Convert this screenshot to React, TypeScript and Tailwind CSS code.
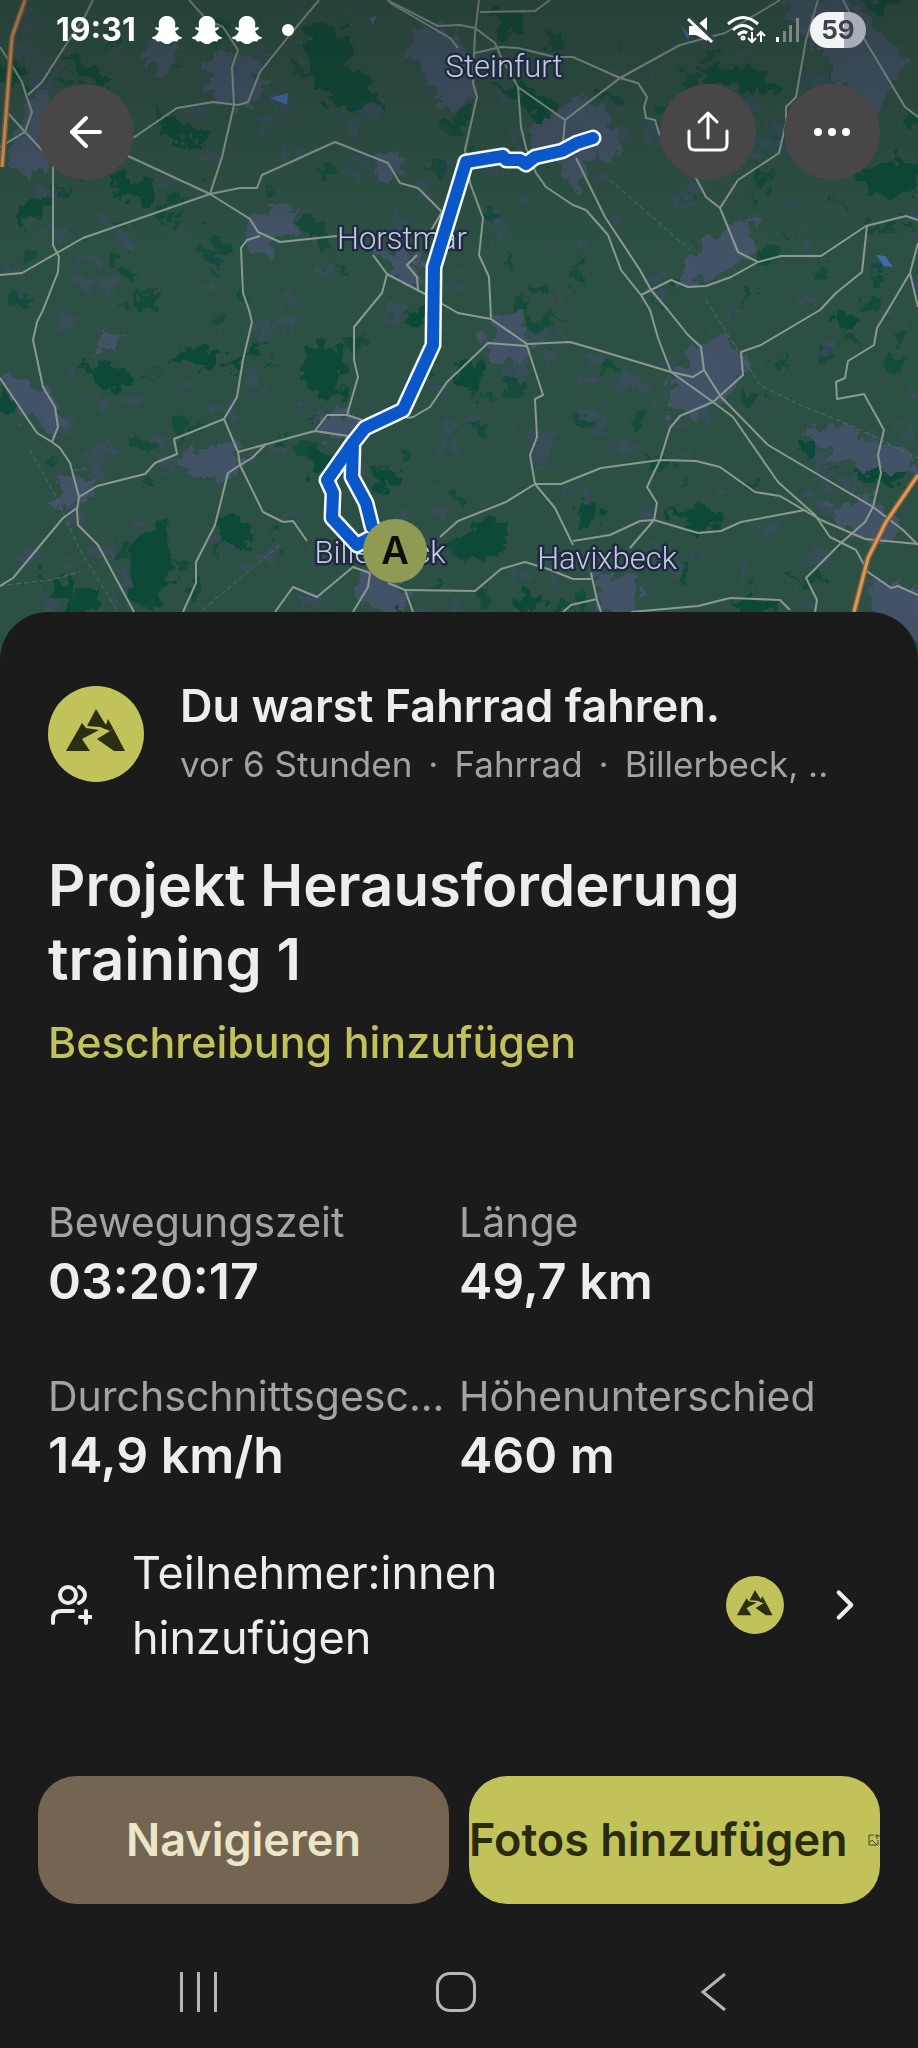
import { ArrowLeft, ChevronRight } from 'lucide-react';
import { FaSnapchatGhost } from 'react-icons/fa';

const ROADS = [
  '93,0 83,20 67,43 42,82 28,95',
  '0,47 13,67 22,82 26,95 32,112 25,132 0,147',
  '7,112 25,132 42,150 53,165 53,245 59,257 58,272 43,310 37,322 33,340 43,387 55,407 58,427 52,442',
  '0,275 22,273 83,238 210,194 240,188 257,188 262,175 335,142 388,163 400,183 418,188 442,212 430,232',
  '128,156 210,194 250,219 258,232 280,242 337,236',
  '133,138 177,108 213,102 238,105 248,102 260,72 288,37 319,0',
  '189,0 207,20 223,27 238,50 232,67 234,105 222,157 210,194',
  '260,236 247,240 241,248 243,293 249,310 252,322 243,360 237,397 224,419',
  '387,0 438,26 460,25 475,28 495,43 501,57 518,87 565,120 620,78 680,45 725,33 780,0',
  '390,3 450,38 458,48',
  '373,255 387,274 425,294 458,313 491,319 527,344 570,342 591,348 671,372 693,377 704,370',
  '387,274 382,293 354,327 354,360 358,377 347,415',
  '417,255 407,265 417,277 418,290',
  '479,0 475,33 473,83 477,97 465,150 470,183 483,218 479,255 489,277 491,318',
  '480,12 535,11 550,0',
  '475,53 501,47 518,48 555,57 573,57 620,78 638,83 647,97 644,107 646,118 655,120 659,133 696,178 706,197 720,208 738,252 758,262',
  '518,87 521,127 526,148 536,173 546,187 573,205 586,210 608,235 621,270 641,295 650,310 658,338 671,372',
  '565,120 563,143',
  '576,158 605,217 640,270 651,290 668,310 688,335 701,347 704,370 721,397 768,445 873,507 903,530 918,545',
  '641,295 671,280 688,287 706,286 731,277 758,262 781,256 821,256 866,226 906,216 918,220',
  '867,226 862,272 836,293 820,310 761,345 741,352 743,375 713,402 680,416 670,428 660,460 647,487 657,503 654,520 630,548',
  '818,0 806,40 796,97 786,107 786,123 779,153 738,180 720,208',
  '843,0 863,37 905,107 918,117',
  '918,243 910,273 888,310 877,328 874,345 848,361 845,378 836,382 837,399 864,394 884,430 878,455 881,473 873,507 865,522 841,543 806,578 817,600 815,612',
  '910,273 918,307',
  '407,418 413,417 430,407 447,382 488,343 527,346 543,395 535,399 537,437 530,455 535,484 555,508 573,545',
  '440,537 458,521 506,502 535,484 561,484 601,468 660,460 696,461 720,467 755,492 780,496 821,520 865,539 918,544',
  '671,372 713,402 733,417 778,482 815,515 830,537 856,550 868,572 891,588 898,586 918,595',
  '573,541 610,535 640,521 654,520 698,533 721,531 741,522 805,510',
  '405,590 475,591 501,569 525,562 548,569 573,579 591,579',
  '591,573 597,600 601,612',
  '597,599 571,605 563,612',
  '631,612 698,606 730,598 780,600 790,610',
  '0,378 37,433 52,442 60,448 70,463 79,497 77,510 78,525 98,545 134,612',
  '0,586 13,578 63,518 77,508',
  '79,497 97,486 145,474 155,463 177,454 174,439 224,419 238,452 240,465 263,512 283,522 293,521 307,541',
  '238,452 307,433 315,431 348,436',
  '315,431 327,415 347,415 362,420',
  '265,445 252,458 240,465 228,473 215,525 196,562 196,583 183,612',
  '275,612 293,587 317,597 353,567 370,573 368,587 353,612',
  '388,583 405,590 413,612',
];

const RAILS = [
  '610,180 650,215 690,250',
  '706,300 728,335 760,385 800,405 850,425 918,458',
  '30,450 55,495 80,550 118,612',
  '280,545 200,612',
  '0,586 50,580 80,572',
];

const HIGHWAYS = ['25,0 12,37 2,167', '918,475 886,522 868,558 854,612'];

const ROUTE =
  'M593 138 577 143 562 151 535 157 526 164 520 160 506 160 503 156 466 162 434 267 433 345 403 410 365 428 353 443 327 480 333 493 332 518 357 545 385 530 M353 443 352 477 366 503 372 527 390 545';

// forests, drawn as x y pairs
const FORESTS = [
  '305,28 340,22 345,60 368,88 385,92 378,105 345,108 330,98 308,75',
  '495,10 512,8 516,30 498,38',
  '865,0 900,0 895,10 872,8',
  '500,85 545,95 560,118 545,125 522,105',
  '700,65 765,72 775,92 740,86 705,78',
  '860,172 900,160 918,168 918,195 870,190',
  '68,55 85,62 110,88 98,92 78,75',
  '160,118 190,125 205,142 180,140 165,132',
  '115,178 148,185 148,200 118,196',
  '20,205 50,198 42,215 22,222',
  '85,365 125,370 128,385 98,385',
  '305,350 342,345 340,398 325,400 303,378',
  '135,540 160,528 170,560 162,602 130,600 135,570',
  '222,518 245,525 246,545 220,540',
  '262,342 255,352 240,358 242,364 232,364',
  '0,70 25,65 22,85 0,82',
  '458,535 505,520 505,550 478,558 458,550',
  '575,508 592,500 600,520 580,528',
  '672,510 715,512 716,528 690,530',
  '858,470 905,478 900,484 866,480',
  '458,364 482,366 478,388 458,385',
  '0,392 12,398 8,410 0,408',
  '375,470 400,475 396,488 378,484',
  '800,440 820,442 815,455 800,450',
  '55,580 72,586 68,600 54,594',
  '70,596 98,590 90,612 66,612',
  '520,595 540,598 538,612 522,610',
  '832,312 852,318 848,328 835,322',
  '428,307 418,304 410,322 418,325',
  '310,452 330,458 330,475 312,472',
  '735,600 780,605 775,614 738,612',
  '200,370 225,355 218,350 180,352 176,360 198,362',
];

const TOWNS = [
  '220,48 250,58 265,85 248,108 228,100 205,82',
  '410,30 455,30 475,90 455,110 430,85 415,60',
  '530,130 565,110 580,95 605,115 620,150 590,160 575,198 570,170 540,150',
  '782,0 840,0 905,60 880,95 868,130 850,90 830,55 800,30',
  '35,95 50,100 45,160 30,180 12,160 18,130',
  '250,218 290,208 298,235 268,240 275,260 258,250',
  '378,162 395,150 402,172 384,180',
  '378,252 410,248 420,285 398,275',
  '728,225 752,225 750,255 715,275 680,285 690,262',
  '5,380 28,382 55,405 58,430 30,420 15,400',
  '485,338 500,318 522,315 525,345 512,362 492,360',
  '698,345 722,335 745,358 735,385 715,402 680,412 668,405 678,375',
  '208,450 235,440 240,470 215,478 195,472 180,458',
  '322,420 350,415 350,432 328,438',
  '62,480 92,474 90,496 65,510 58,500',
  '360,575 388,570 405,600 390,612 360,600',
  '593,575 640,580 632,608 605,608',
  '830,505 868,500 895,530 880,545 845,530 835,520',
  '874,580 918,590 918,640 890,625 876,600',
  '810,430 850,428 870,445 905,450 918,475 870,468 830,455',
  '100,335 118,338 112,350 100,350',
  '160,35 175,50 165,68 140,60',
];

const WATER = ['270,98 288,93 287,105', '876,255 885,256 893,267 884,266', '370,18 376,16 373,25', '680,25 690,35 688,40'];

// deterministic pseudo random so the fields stay in place between renders
const rand = (n: number) => {
  const v = Math.sin(n * 127.1 + 311.7) * 43758.5453;
  return v - Math.floor(v);
};

const FIELDS = Array.from({ length: 520 }, (_, i) => {
  const x = Math.round(rand(i) * 918);
  const y = Math.round(rand(i + 1000) * 650);
  const w = 5 + Math.round(rand(i + 2000) * 18);
  const h = 5 + Math.round(rand(i + 3000) * 16);
  return {
    points: `${x},${y} ${x + w},${y + 3} ${x + w - 3},${y + h} ${x + 2},${y + h - 2}`,
    forest: i % 3 === 0,
  };
});

const LABELS = [
  { name: 'Steinfurt', x: 504, y: 77 },
  { name: 'Horstmar', x: 402, y: 249 },
  { name: 'Billerbeck', x: 380, y: 563 },
  { name: 'Havixbeck', x: 607, y: 569 },
];

const STATS = [
  { label: 'Bewegungszeit', value: '03:20:17' },
  { label: 'Länge', value: '49,7 km' },
  { label: 'Durchschnittsgesc...', value: '14,9 km/h' },
  { label: 'Höhenunterschied', value: '460 m' },
];

function TourMap() {
  return (
    <svg
      className="absolute inset-0 h-full w-full bg-[#2d5044]"
      viewBox="0 0 918 660"
      preserveAspectRatio="xMidYMin slice"
      role="img"
      aria-label="Karte der Tour"
    >
      <defs>
        <linearGradient id="shade" x1="0" y1="0" x2="0" y2="1">
          <stop offset="0" stopColor="#1d2b28" stopOpacity="0.4" />
          <stop offset="1" stopColor="#1d2b28" stopOpacity="0" />
        </linearGradient>
        {/* breaks up the straight polygon edges of woods and villages */}
        <filter id="rough" x="0" y="0" width="918" height="660" filterUnits="userSpaceOnUse">
          <feTurbulence type="fractalNoise" baseFrequency="0.07" numOctaves="3" seed="4" result="noise" />
          <feDisplacementMap in="SourceGraphic" in2="noise" scale="30" xChannelSelector="R" yChannelSelector="G" />
        </filter>
      </defs>
      <g filter="url(#rough)">
        {FIELDS.map((f, i) => (
          <polygon key={i} points={f.points} fill={f.forest ? '#134a3a' : '#3b4c60'} opacity={f.forest ? 0.8 : 0.7} />
        ))}
        {FORESTS.map((p) => (
          <polygon key={p} points={p} fill="#0e4a38" stroke="#0e4a38" strokeWidth="4" />
        ))}
        {TOWNS.map((p) => (
          <polygon key={p} points={p} fill="#48546c" stroke="#48546c" strokeWidth="4" opacity="0.9" />
        ))}
      </g>
      {WATER.map((p) => (
        <polygon key={p} points={p} fill="#3f6ba8" />
      ))}
      <g fill="none" strokeLinejoin="round">
        {RAILS.map((p) => (
          <polyline key={p} points={p} stroke="#4f7064" strokeWidth="1" strokeDasharray="5 3" />
        ))}
        {ROADS.map((p) => (
          <polyline key={p} points={p} stroke="#8b9a90" strokeWidth="2" />
        ))}
        {HIGHWAYS.map((p) => (
          <g key={p}>
            <polyline points={p} stroke="#8a5a35" strokeWidth="6" />
            <polyline points={p} stroke="#d59a5c" strokeWidth="3" />
          </g>
        ))}
      </g>
      <rect width="918" height="240" fill="url(#shade)" />
      <g
        fill="#c3cbe0"
        stroke="#1f2a40"
        strokeWidth="5"
        strokeLinejoin="round"
        paintOrder="stroke"
        textAnchor="middle"
        className="font-['Roboto','Noto_Sans',sans-serif] text-[31px] font-light"
      >
        {LABELS.map((l) => (
          <text key={l.name} x={l.x} y={l.y}>{l.name}</text>
        ))}
      </g>
      <g fill="none" strokeLinecap="round" strokeLinejoin="round">
        <path d={ROUTE} stroke="#f4f8ff" strokeWidth="17" />
        <path d={ROUTE} stroke="#0a57c9" strokeWidth="12" />
      </g>
      <circle cx="395" cy="551" r="32" fill="#8f9a55" />
      <text x="395" y="564" textAnchor="middle" fill="#0d0e08" className="font-['Inter',sans-serif] text-[38px] font-semibold">A</text>
    </svg>
  );
}

function MountainBadge({ className }: { className: string }) {
  return (
    <svg className={className} viewBox="0 0 96 96" aria-hidden="true">
      <circle cx="48" cy="48" r="48" fill="#c2c25a" />
      <g fill="#2b2f12">
        <path d="M48 23 56 36 58 39 60 33 65 42 62 45 52 41 39 40Z" />
        <path d="M34 37 38 42 51 44 34 53 42 65 18 65Z" />
        <path d="M65 42 77 65 66 65 49 53 62 45Z" />
      </g>
    </svg>
  );
}

function StatusBar() {
  return (
    <div className="flex h-15 items-center justify-between pr-13 pl-14 text-white">
      <div className="flex items-center gap-3">
        <span className="text-[32px] leading-10 font-bold">19:31</span>
        <div className="ml-1 flex gap-2.5">
          <FaSnapchatGhost size={30} />
          <FaSnapchatGhost size={30} />
          <FaSnapchatGhost size={30} />
        </div>
        <span className="ml-2 h-3 w-3 rounded-full bg-white" />
      </div>
      <div className="flex items-center gap-2.5">
        <svg className="h-8 w-8" viewBox="0 0 32 32" aria-label="Stumm">
          <path d="M5 12H12L23 3V27L12 21H5Z" fill="#fff" />
          <path d="M5 2 31 27" stroke="#31463f" strokeWidth="4" />
          <path d="M4 5 28 28" stroke="#fff" strokeWidth="3" />
        </svg>
        <svg className="h-8 w-10" viewBox="0 0 40 32" fill="none" stroke="#fff" strokeWidth="3" aria-label="WLAN">
          <path d="M2 10Q17-3 32 10M7 16Q17 7 27 16M12 21Q17 16 21 19" />
          <path d="M26 18V28M22 24 26 28 30 24M35 28V18M31 22 35 18 39 22" strokeWidth="2" />
          <circle cx="17" cy="24" r="1" />
        </svg>
        <svg className="h-8 w-6" viewBox="0 0 24 32" aria-label="Mobilfunk">
          <path d="M0 23H3V28H0Z" fill="#fff" />
          <path d="M7 17H10V28H7ZM13 11H16V28H13ZM20 4H23V28H20Z" fill="#7d8689" />
        </svg>
        <span className="flex h-9 w-14 items-center justify-center rounded-full bg-linear-to-r from-[#f2f4f3] from-60% to-[#a9adb6] to-60% text-[26px] leading-none font-bold text-[#3d4450]">
          59
        </span>
      </div>
    </div>
  );
}

function App() {
  return (
    <div className="flex min-h-screen w-full flex-col bg-[#1b1b1b] font-['Inter','Noto_Sans',sans-serif] text-[#ededeb]">
      <header className="relative h-[660px]">
        <TourMap />
        <div className="relative">
          <StatusBar />
          <div className="mt-6 flex items-center justify-between px-[38px]">
            <button aria-label="Zurück" className="flex h-24 w-24 items-center justify-center rounded-full bg-[#484646]">
              <ArrowLeft size={48} strokeWidth={2} className="text-white" />
            </button>
            <div className="flex gap-7">
              <button aria-label="Teilen" className="flex h-24 w-24 items-center justify-center rounded-full bg-[#484646]">
                <svg className="h-11 w-11" viewBox="0 0 44 44" fill="none" stroke="#fff" strokeWidth="3" strokeLinecap="round" strokeLinejoin="round">
                  <path d="M22 28V3M13 12 22 3 31 12" />
                  <path d="M3 21V34Q3 40 9 40H35Q41 40 41 34V21" />
                </svg>
              </button>
              <button aria-label="Mehr" className="flex h-24 w-24 items-center justify-center gap-1.5 rounded-full bg-[#484646]">
                <span className="h-2 w-2 rounded-full bg-white" />
                <span className="h-2 w-2 rounded-full bg-white" />
                <span className="h-2 w-2 rounded-full bg-white" />
              </button>
            </div>
          </div>
        </div>
      </header>

      <main className="relative -mt-12 flex flex-1 flex-col rounded-t-[48px] bg-[#1b1b1b] px-12 pt-16">
        <div className="flex items-center gap-9">
          <MountainBadge className="h-24 w-24 shrink-0" />
          <div className="min-w-0">
            <h2 className="text-[45px] leading-[60px] font-semibold">Du warst Fahrrad fahren.</h2>
            <p className="flex gap-4 text-[35px] leading-[56px] whitespace-nowrap text-[#a3a3a2]">
              <span>vor 6 Stunden</span>
              <span>·</span>
              <span>Fahrrad</span>
              <span>·</span>
              <span>Billerbeck, ..</span>
            </p>
          </div>
        </div>

        <h1 className="mt-14 max-w-[760px] text-[58px] leading-[74px] font-semibold">Projekt Herausforderung training 1</h1>
        <a href="#beschreibung" className="mt-4 self-start text-[43px] leading-[60px] font-medium text-[#c2c25a]">
          Beschreibung hinzufügen
        </a>

        <dl className="mt-[120px] grid grid-cols-2 gap-y-14">
          {STATS.map((s) => (
            <div key={s.label} className="min-w-0 pr-1">
              <dt className="truncate text-[41px] leading-[60px] text-[#a3a3a2]">{s.label}</dt>
              <dd className="text-[50px] leading-[58px] font-semibold">{s.value}</dd>
            </div>
          ))}
        </dl>

        <button className="mt-14 flex items-center text-left">
          <svg className="h-11 w-11 shrink-0" viewBox="0 0 44 44" fill="none" stroke="#ededeb" strokeWidth="4" strokeLinecap="round">
            <circle cx="20" cy="12" r="8" />
            <path d="M31 4Q37 7 37 12T31 20" />
            <path d="M5 40V36Q5 28 13 28H25" />
            <path d="M38 28V40M32 34H44" />
          </svg>
          <span className="ml-10 w-[440px] text-[45px] leading-[65px]">Teilnehmer:innen hinzufügen</span>
          <MountainBadge className="ml-auto h-[58px] w-[58px]" />
          <ChevronRight size={50} strokeWidth={2} className="ml-9" />
        </button>
      </main>

      <footer>
        <div className="grid grid-cols-2 gap-5 px-[38px]">
          <button className="h-32 rounded-[38px] bg-[#746552] text-[45px] font-semibold text-[#ece6c8]">Navigieren</button>
          <button className="flex h-32 items-center justify-between overflow-hidden rounded-[38px] bg-[#c2c25a] text-[45px] font-semibold whitespace-nowrap text-[#2a2a0c]">
            Fotos hinzufügen
            <svg className="h-3 w-3 shrink-0" viewBox="0 0 12 12" fill="none" stroke="#4b4a1c">
              <path d="M6 1H1V11H10V6M1 9 4 6 9 11M9 0V5M7 2H12" />
            </svg>
          </button>
        </div>
        <nav className="flex h-[144px] items-center justify-between pt-8 pr-[184px] pl-[178px] text-[#b5b5b5]">
          <button aria-label="Letzte Apps" className="flex h-10 w-10 items-center justify-center gap-3.5">
            <span className="h-10 w-[3px] bg-current" />
            <span className="h-10 w-[3px] bg-current" />
            <span className="h-10 w-[3px] bg-current" />
          </button>
          <button aria-label="Startseite" className="h-10 w-10 rounded-[14px] border-3 border-current" />
          <button aria-label="Zurück" className="h-10 w-10">
            <svg className="h-10 w-10" viewBox="0 0 40 40" fill="none" stroke="currentColor" strokeWidth="3">
              <path d="M31 2 9 20 31 38" />
            </svg>
          </button>
        </nav>
      </footer>
    </div>
  );
}

export default App;
